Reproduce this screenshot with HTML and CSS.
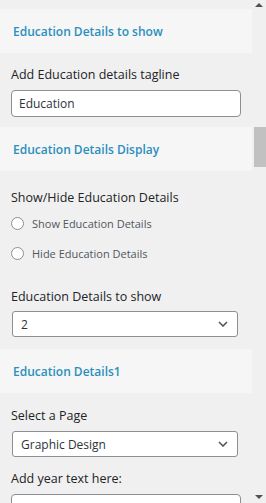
FILE: index.html
```html
<!DOCTYPE html>
<html lang="en">
<head>
    <meta charset="UTF-8">
    <meta name="viewport" content="width=device-width, initial-scale=1.0">
    <title>Education Details</title>
    <link rel="stylesheet" href="styles.css">
</head>
<body>
    <div class="frame">
        <div class="panel">
            <div class="section-head">Education Details to show</div>
            <div class="field first">
                <label class="field-label">Add Education details tagline</label>
                <input class="text-input" type="text" value="Education">
            </div>

            <div class="section-head">Education Details Display</div>
            <div class="field radios">
                <span class="field-label">Show/Hide Education Details</span>
                <label class="radio-row"><span class="radio"></span>Show Education Details</label>
                <label class="radio-row"><span class="radio"></span>Hide Education Details</label>
            </div>
            <div class="field count">
                <span class="field-label">Education Details to show</span>
                <div class="select">
                    <span>2</span>
                    <svg class="chevron" width="10" height="6" viewBox="0 0 10 6"><path d="M1 1l4 4 4-4" fill="none" stroke="#50575e" stroke-width="1.6"/></svg>
                </div>
            </div>

            <div class="section-head">Education Details1</div>
            <div class="field page">
                <span class="field-label">Select a Page</span>
                <div class="select">
                    <span>Graphic Design</span>
                    <svg class="chevron" width="10" height="6" viewBox="0 0 10 6"><path d="M1 1l4 4 4-4" fill="none" stroke="#50575e" stroke-width="1.6"/></svg>
                </div>
                <span class="field-label year">Add year text here:</span>
                <div class="text-input"></div>
            </div>
        </div>

        <div class="scrollbar">
            <span class="arrow up"></span>
            <div class="track"><div class="thumb"></div></div>
            <span class="arrow down"></span>
        </div>
    </div>
</body>
</html>
```

FILE: styles.css
```css
/* base */
body {
    margin: 0;
    background-color: #f0f0f0;
    font-family: "Open Sans", "Noto Sans", sans-serif;
    color: #1d2327;
    overflow: hidden;
}

.frame {
    display: flex;
    width: 266px;
    height: 503px;
    overflow: hidden;
}

.panel {
    width: 252px;
    padding-top: 9px;
    flex-shrink: 0;
}

/* section headers */
.section-head {
    height: 44px;
    display: flex;
    align-items: center;
    padding-left: 13px;
    background-color: #f6f6f6;
    color: #2a8fbd;
    font-size: 12px;
    font-weight: 600;
}

/* fields */
.field {
    display: flex;
    flex-direction: column;
    padding-left: 11px;
}

.field.first {
    padding-top: 13px;
    padding-bottom: 10px;
}

.field.radios {
    padding-top: 18px;
    padding-bottom: 10px;
}

.field.count {
    padding-top: 10px;
    padding-bottom: 12px;
}

.field.page {
    padding-top: 14px;
}

.field-label {
    font-size: 12.5px;
    line-height: 18px;
    margin-bottom: 5px;
}

.field.first .field-label,
.field.page .field-label {
    margin-bottom: 6px;
}

.field-label.year {
    margin-top: 13px;
}

.text-input {
    box-sizing: border-box;
    width: 230px;
    height: 27px;
    margin: 0;
    padding: 0 7px;
    border: 1px solid #8c8f94;
    border-radius: 4px;
    background: #fff;
    font-family: inherit;
    font-size: 12px;
    color: #2c3338;
    outline: none;
}

.select {
    box-sizing: border-box;
    width: 226px;
    height: 26px;
    margin-left: 1px;
    padding: 0 9px 0 8px;
    border: 1px solid #8c8f94;
    border-radius: 3px;
    background: #fff;
    display: flex;
    align-items: center;
    justify-content: space-between;
    font-size: 12px;
    color: #2c3338;
}

/* radios */
.radio-row {
    display: flex;
    align-items: center;
    gap: 8px;
    height: 30px;
    font-size: 11px;
    color: #50575e;
}

.radios .field-label + .radio-row {
    margin-top: -4px;
}

.radio {
    box-sizing: border-box;
    width: 13px;
    height: 13px;
    border: 1px solid #8c8f94;
    border-radius: 50%;
    background: #fff;
}

/* fake scrollbar */
.scrollbar {
    width: 14px;
    display: flex;
    flex-direction: column;
    align-items: center;
    background-color: #f0f0f0;
}

.arrow {
    width: 0;
    height: 0;
    border-left: 4px solid transparent;
    border-right: 4px solid transparent;
}

.arrow.up {
    margin-top: 3px;
    border-bottom: 4px solid #505050;
}

.arrow.down {
    margin-bottom: 4px;
    border-top: 4px solid #505050;
}

.track {
    flex: 1;
    width: 100%;
    padding-top: 120px;
}

.thumb {
    margin-left: 2px;
    width: 12px;
    height: 40px;
    background-color: #c1c1c1;
}
```
